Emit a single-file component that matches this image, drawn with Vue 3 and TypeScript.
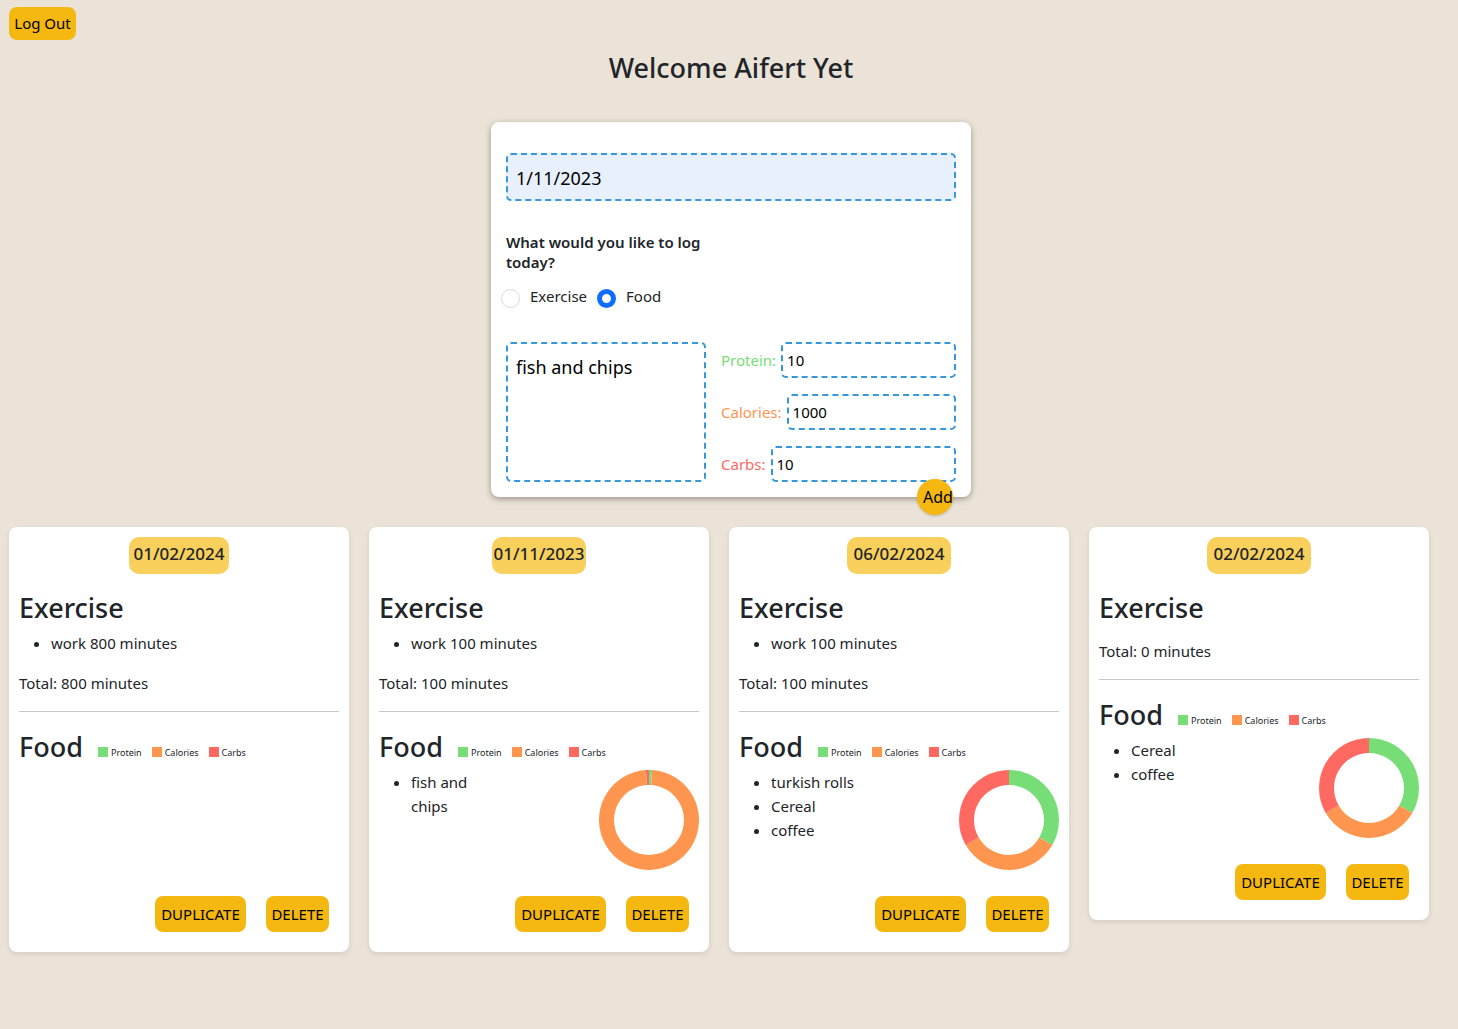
<script setup lang="ts">
interface Slice { color: string; from: number; to: number }
interface Entry {
  date: string
  dateWidth: number
  exercise: string[]
  total: number
  food: string[]
  slices: Slice[]
}

const GREEN = '#77dd77'
const ORANGE = '#ff964f'
const RED = '#ff6961'

const thirds: Slice[] = [
  { color: GREEN, from: 0, to: 120 },
  { color: ORANGE, from: 120, to: 240 },
  { color: RED, from: 240, to: 360 },
]

const entries: Entry[] = [
  { date: '01/02/2024', dateWidth: 100, exercise: ['work 800 minutes'], total: 800, food: [], slices: [] },
  {
    date: '01/11/2023',
    dateWidth: 94,
    exercise: ['work 100 minutes'],
    total: 100,
    food: ['fish and chips'],
    slices: [
      { color: GREEN, from: 0, to: 3.5 },
      { color: ORANGE, from: 3.5, to: 356.5 },
      { color: RED, from: 356.5, to: 360 },
    ],
  },
  {
    date: '06/02/2024',
    dateWidth: 104,
    exercise: ['work 100 minutes'],
    total: 100,
    food: ['turkish rolls', 'Cereal', 'coffee'],
    slices: thirds,
  },
  { date: '02/02/2024', dateWidth: 104, exercise: [], total: 0, food: ['Cereal', 'coffee'], slices: thirds },
]

const legend = [
  { label: 'Protein', color: GREEN },
  { label: 'Calories', color: ORANGE },
  { label: 'Carbs', color: RED },
]

function point(r: number, deg: number): string {
  const a = ((deg - 90) * Math.PI) / 180
  return `${(50 + r * Math.cos(a)).toFixed(3)} ${(50 + r * Math.sin(a)).toFixed(3)}`
}

function arc(s: Slice): string {
  const large = s.to - s.from > 180 ? 1 : 0
  return `M${point(50, s.from)} A50 50 0 ${large} 1 ${point(50, s.to)} L${point(35, s.to)} A35 35 0 ${large} 0 ${point(35, s.from)} Z`
}
</script>

<template>
  <main class="page">
    <button class="logout">Log Out</button>
    <h1 class="welcome">Welcome Aifert Yet</h1>

    <form class="log-form" @submit.prevent>
      <input class="field date-field" value="1/11/2023" />
      <p class="question">What would you like to log today?</p>
      <div class="radios">
        <span class="radio"></span>
        <span class="radio-label">Exercise</span>
        <span class="radio checked"></span>
        <span class="radio-label">Food</span>
      </div>
      <div class="food-row">
        <textarea class="field food-name">fish and chips</textarea>
        <div class="macros">
          <label class="macro protein">Protein:<input class="field" value="10" /></label>
          <label class="macro calories">Calories:<input class="field" value="1000" /></label>
          <label class="macro carbs">Carbs:<input class="field" value="10" /></label>
        </div>
      </div>
      <button class="add">Add</button>
    </form>

    <section class="cards">
      <article v-for="e in entries" :key="e.date" class="card">
        <div class="date-wrap"><span class="date" :style="{ width: e.dateWidth + 'px' }">{{ e.date }}</span></div>
        <h2>Exercise</h2>
        <ul v-if="e.exercise.length" class="list exercise-list">
          <li v-for="x in e.exercise" :key="x">{{ x }}</li>
        </ul>
        <p class="total">Total: {{ e.total }} minutes</p>
        <hr />
        <div class="food-head">
          <h2>Food</h2>
          <div class="legend">
            <span v-for="l in legend" :key="l.label" class="legend-item">
              <i :style="{ background: l.color }"></i>{{ l.label }}
            </span>
          </div>
        </div>
        <div class="food-body">
          <ul class="list food-list">
            <li v-for="f in e.food" :key="f">{{ f }}</li>
          </ul>
          <svg v-if="e.slices.length" class="donut" width="100" height="100" viewBox="0 0 100 100">
            <path v-for="s in e.slices" :key="s.color" :d="arc(s)" :fill="s.color" />
          </svg>
        </div>
        <div class="actions">
          <button class="dup">DUPLICATE</button>
          <button class="del">DELETE</button>
        </div>
      </article>
    </section>
  </main>
</template>

<style>
html, body {
  background: #ebe3d7;
}
</style>

<style scoped>
.page {
  box-sizing: border-box;
  min-height: 1029px;
  padding: 7px 0 0 9px;
  font-family: "Noto Sans", "Open Sans", sans-serif;
  color: #212529;
  background: #ebe3d7;
}
button {
  font-family: inherit;
  color: #000;
  border: none;
  background: #f5b811;
  border-radius: 8px;
  cursor: pointer;
}
.logout {
  display: block;
  width: 67px;
  height: 33px;
  padding: 0 0 2px;
  font-size: 15px;
}
.welcome {
  margin: 9px 0 0 -5px;
  text-align: center;
  font-size: 27px;
  line-height: 38px;
  font-weight: 500;
}
.log-form {
  position: relative;
  box-sizing: border-box;
  width: 480px;
  height: 375px;
  margin: 35px 0 0 482px;
  padding: 31px 15px 0;
  background: #fff;
  border-radius: 8px;
  box-shadow: 0 2px 6px rgba(0, 0, 0, 0.35);
}
.field {
  box-sizing: border-box;
  display: block;
  border: 2px dashed #3498db;
  border-radius: 5px;
  background: #fff;
  color: #000;
  font-family: inherit;
  outline: none;
}
.date-field {
  width: 100%;
  height: 48px;
  padding: 2px 8px 0;
  font-size: 18px;
  background: #e8f0fe;
}
.question {
  width: 220px;
  margin: 31px 0 0;
  font-size: 15px;
  line-height: 20px;
  font-weight: 600;
}
.radios {
  display: flex;
  align-items: center;
  margin: 13px 0 0 -5px;
  height: 24px;
  font-size: 15px;
}
.radio {
  box-sizing: border-box;
  width: 19px;
  height: 19px;
  margin-top: 2px;
  border: 1px solid #dcdcdc;
  border-radius: 50%;
  background: #fff;
}
.radio.checked {
  border: 5px solid #0d6efd;
}
.radio-label {
  margin: -3px 10px 0 10px;
}
.food-row {
  display: flex;
  gap: 15px;
  margin-top: 33px;
}
.food-name {
  flex: none;
  width: 200px;
  height: 140px;
  padding: 11px 8px;
  font-size: 18px;
  line-height: 24px;
  resize: none;
  overflow: hidden;
}
.macros {
  flex: 1;
  min-width: 0;
  display: flex;
  flex-direction: column;
  gap: 16px;
}
.macro {
  display: flex;
  align-items: center;
  gap: 5px;
  height: 36px;
  font-size: 15px;
}
.macro input {
  flex: 1;
  min-width: 0;
  height: 36px;
  padding: 0 4px;
  font-size: 15px;
}
.protein { color: #77dd77; }
.calories { color: #ff964f; }
.carbs { color: #ff6961; }
.add {
  position: absolute;
  right: 18px;
  bottom: -18px;
  width: 36px;
  height: 36px;
  padding: 0 0 0 6px;
  border-radius: 50%;
  font-size: 16px;
  text-align: left;
  white-space: nowrap;
  box-shadow: 0 1px 3px rgba(0, 0, 0, 0.2);
}
.cards {
  display: flex;
  align-items: flex-start;
  gap: 20px;
  margin-top: 30px;
}
.card {
  box-sizing: border-box;
  width: 340px;
  padding: 10px;
  background: #fff;
  border-radius: 8px;
  box-shadow: 0 2px 5px rgba(0, 0, 0, 0.1);
}
.date-wrap {
  text-align: center;
  height: 37px;
}
.date {
  display: inline-block;
  height: 37px;
  line-height: 34px;
  font-size: 17px;
  font-weight: 500;
  white-space: nowrap;
  background: #f9d05b;
  border-radius: 10px;
}
h2 {
  margin: 0;
  font-size: 27px;
  line-height: 38px;
  font-weight: 500;
}
.card > h2 {
  margin-top: 15px;
}
.list {
  margin: 0;
  padding-left: 32px;
  font-size: 15px;
  line-height: 24px;
}
.exercise-list {
  margin-top: 4px;
}
.total {
  margin: 16px 0 0;
  font-size: 15px;
  line-height: 24px;
}
.card > h2 + .total {
  margin-top: 12px;
}
hr {
  margin: 16px 0 0;
  border: none;
  border-top: 1px solid #c8c8c8;
}
.food-head {
  display: flex;
  align-items: center;
  margin-top: 16px;
}
.legend {
  display: flex;
  gap: 10px;
  margin: 10px 0 0 15px;
  font-size: 9px;
}
.legend-item {
  display: flex;
  align-items: center;
  gap: 3px;
}
.legend-item i {
  width: 10px;
  height: 10px;
}
.food-body {
  display: flex;
  justify-content: space-between;
  height: 100px;
  margin-top: 4px;
}
.food-list {
  width: 90px;
}
.actions {
  display: flex;
  justify-content: flex-end;
  gap: 20px;
  margin: 26px 10px 10px 0;
}
.actions button {
  height: 36px;
  font-size: 15px;
}
.dup {
  width: 91px;
  padding: 0;
}
.del {
  width: 63px;
  padding: 0;
}
</style>
